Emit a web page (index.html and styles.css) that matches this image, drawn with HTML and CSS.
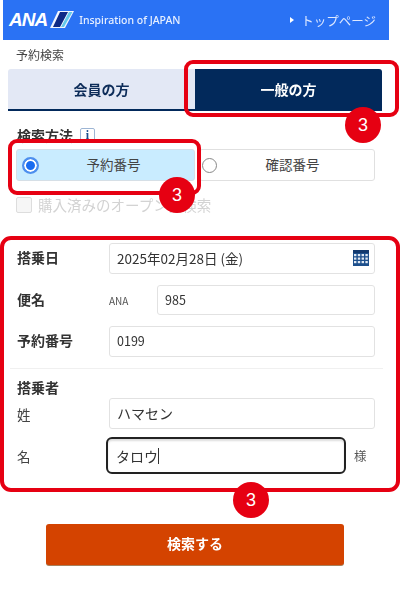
FILE: index.html
```html
<!DOCTYPE html>
<html lang="ja">
<head>
<meta charset="utf-8">
<title>予約検索</title>
<link rel="stylesheet" href="styles.css">
</head>
<body>
<div class="page">
  <header class="header">
    <div class="brand">
      <span class="ana">ANA</span>
      <svg class="wing" viewBox="0 0 24 18" width="24" height="18"><polygon points="8,0 24,0 15,17 0,17" fill="#f2f6ff"/><polygon points="10,1 18,1 10,16 3,16" fill="#0f2a86"/><polygon points="19,1 22.5,1 14,16 11,16" fill="#63c8ea"/></svg>
      <span class="tagline">Inspiration of JAPAN</span>
    </div>
    <div class="top-link"><span class="tri"></span>トップページ</div>
  </header>
  <div class="title">予約検索</div>
  <div class="tabs">
    <div class="tab">会員の方</div>
    <div class="tab active">一般の方</div>
  </div>
  <div class="method-label">検索方法<span class="info">i</span></div>
  <div class="radios">
    <div class="radio selected"><span class="dot on"></span><span class="radio-text">予約番号</span></div>
    <div class="radio"><span class="dot"></span><span class="radio-text">確認番号</span></div>
  </div>
  <div class="check-row"><span class="check"></span>購入済みのオープン券検索</div>
  <div class="form">
    <div class="row r-date">
      <div class="lbl b">搭乗日</div>
      <div class="input date"><span>2025年02月28日 (金)</span>
        <svg class="cal" viewBox="0 0 16 16" width="16" height="16"><rect x="0" y="0" width="16" height="16" fill="#1d4f8c"/><rect x="0" y="0" width="16" height="3" fill="#12396e"/><g fill="#dfe8f3"><rect x="1" y="4" width="2.4" height="2.2"/><rect x="4.8" y="4" width="2.4" height="2.2"/><rect x="8.6" y="4" width="2.4" height="2.2"/><rect x="12.4" y="4" width="2.4" height="2.2"/><rect x="1" y="7.5" width="2.4" height="2.2"/><rect x="4.8" y="7.5" width="2.4" height="2.2"/><rect x="8.6" y="7.5" width="2.4" height="2.2"/><rect x="12.4" y="7.5" width="2.4" height="2.2"/><rect x="1" y="11" width="2.4" height="2.2"/><rect x="4.8" y="11" width="2.4" height="2.2"/><rect x="8.6" y="11" width="2.4" height="2.2"/><rect x="12.4" y="11" width="2.4" height="2.2"/></g></svg>
      </div>
    </div>
    <div class="row r-flight">
      <div class="lbl b">便名</div>
      <div class="carrier">ANA</div>
      <div class="input grow">985</div>
    </div>
    <div class="row r-num">
      <div class="lbl b">予約番号</div>
      <div class="input">0199</div>
    </div>
    <div class="divider"></div>
    <div class="lbl b pax">搭乗者</div>
    <div class="row r-sei">
      <div class="lbl">姓</div>
      <div class="input">ハマセン</div>
    </div>
    <div class="row r-mei">
      <div class="lbl">名</div>
      <div class="input focus"><span class="caret">タロウ</span></div>
      <div class="sama">様</div>
    </div>
  </div>
  <div class="submit-wrap"><div class="submit">検索する</div></div>

  <div class="ring ring-tab"></div>
  <div class="ring ring-radio"></div>
  <div class="ring ring-form"></div>
  <div class="badge b1">3</div>
  <div class="badge b2">3</div>
  <div class="badge b3">3</div>
</div>
</body>
</html>
```
FILE: styles.css
```css
* { box-sizing: border-box; }
html, body { margin: 0; padding: 0; background: #fff; }
body { font-family: "Noto Sans CJK JP", "Noto Sans", sans-serif; color: #333; }
.page { position: relative; width: 400px; height: 593px; overflow: hidden; filter: blur(0.55px); }

.header { margin: 0 11px 0 3px; height: 40px; background: #2a72f4; color: #fff; display: flex; align-items: center; justify-content: space-between; padding: 0 13px 0 6px; }
.brand { display: flex; align-items: center; }
.ana { font-family: "Liberation Sans", sans-serif; font-weight: 700; font-style: italic; font-size: 19px; letter-spacing: -1px; margin-right: 3px; }
.wing { display: block; margin-right: 5px; }
.tagline { font-family: "Noto Sans", sans-serif; font-size: 10.5px; font-weight: 500; color: #e8f0ff; white-space: nowrap; }
.top-link { display: flex; align-items: center; font-size: 12.5px; color: #dfe9ff; }
.tri { width: 0; height: 0; border-left: 4px solid #fff; border-top: 3px solid transparent; border-bottom: 3px solid transparent; margin-right: 7px; }

.title { margin: 7px 0 0 16px; height: 22px; font-size: 12px; line-height: 16px; color: #444; }
.tabs { margin: 0 18px 0 8px; height: 42px; display: flex; border-bottom: 2px solid #02295b; }
.tab { flex: 1; display: flex; align-items: center; justify-content: center; font-size: 14px; font-weight: 700; color: #0d2c59; background: #e3e8f5; border-radius: 3px 0 0 0; }
.tab.active { background: #02295b; color: #fff; border-radius: 0 3px 0 0; }

.method-label { margin: 16px 0 0 17px; height: 17px; display: flex; align-items: center; font-size: 14px; font-weight: 700; color: #333; line-height: 17px; }
.info { margin-left: 7px; width: 15px; height: 15px; border: 1px solid #9db5d4; border-radius: 2px; display: flex; align-items: center; justify-content: center; font-family: "Liberation Serif", serif; font-size: 12px; font-weight: 700; color: #1c4f8e; }

.radios { margin: 5px 25px 0 16px; height: 32px; display: flex; gap: 6px; }
.radio { flex: 1; display: flex; align-items: center; border: 1px solid #e0e0e0; border-radius: 3px; padding-left: 5px; background: #fff; position: relative; }
.radio.selected { flex: none; width: 179px; background: #c9ecff; border-color: #d6dfe6; }
.radio + .radio { margin-left: -2px; padding-left: 2px; }
.dot { width: 15px; height: 15px; border-radius: 50%; border: 1px solid #888; background: #fff; flex: none; }
.dot.on { width: 17px; height: 17px; border: 2px solid #4d8fee; background: #1a6cf0; box-shadow: inset 0 0 0 2px #fff; }
.radio-text { flex: 1; text-align: center; font-size: 13.5px; line-height: 18px; color: #444; padding: 0 6px 2px 0; }

.check-row { margin: 15px 0 0 16px; height: 18px; display: flex; align-items: center; font-size: 14.5px; color: #d3d3d3; line-height: 18px; white-space: nowrap; }
.check { width: 16px; height: 16px; border: 1px solid #ddd; border-radius: 2px; background: #f6f6f6; margin-right: 6px; flex: none; }

.form { margin: 29px 25px 0 17px; }
.row { display: flex; align-items: center; }
.lbl { width: 92px; flex: none; font-size: 13.5px; color: #444; line-height: 16px; }
.lbl.b { font-size: 14px; font-weight: 700; color: #333; padding-bottom: 3px; }
.input { flex: 1; height: 31px; border: 1.5px solid #e2e2e2; border-radius: 3px; background: #fff; display: flex; align-items: center; padding: 0 0 2px 7px; font-size: 12.5px; color: #333; }
.date { justify-content: space-between; padding-right: 5px; font-size: 13.5px; }
.cal { display: block; }
.carrier { width: 48px; flex: none; font-size: 10px; color: #555; }
.grow { flex: 1; }
.r-flight { margin-top: 11px; }
.r-flight .input { height: 30px; }
.r-num { margin-top: 11px; }
.divider { margin: 11px -8px 0 -7px; height: 1px; background: #f0f0f0; }
.pax { margin-top: 10px; }
.r-sei { margin-top: 0; }
.r-sei .input { font-size: 14px; }
.r-mei { margin-top: 8px; }
.r-mei .lbl { width: 89px; }
.focus { flex: none; width: 240px; height: 37px; border: 2px solid #222; border-radius: 6px; box-shadow: inset 0 2px 2px #ddd; font-size: 14px; padding: 0 0 0 8px; }
.caret { border-right: 1px solid #333; line-height: 16px; }
.sama { margin-left: 8px; font-size: 12.5px; color: #555; }

.submit-wrap { margin: 50px 56px 0 46px; }
.submit { height: 41px; background: #d44300; border-radius: 3px; display: flex; align-items: center; justify-content: center; padding-bottom: 3px; color: #fff; font-size: 14px; font-weight: 700; box-shadow: 0 1px 0 #a8805a; }

.ring { position: absolute; border: 4px solid #e60012; border-radius: 9px; }
.ring-tab { left: 184px; top: 60px; width: 215px; height: 57px; }
.ring-radio { left: 8px; top: 139px; width: 193px; height: 56px; }
.ring-form { left: 0; top: 236px; width: 400px; height: 256px; border-radius: 11px; }
.badge { position: absolute; width: 36px; height: 36px; border-radius: 50%; background: #e60012; color: #fff; font-family: "Liberation Sans", sans-serif; font-size: 18px; display: flex; align-items: center; justify-content: center; }
.b1 { left: 345px; top: 107px; }
.b2 { left: 159px; top: 177px; }
.b3 { left: 233px; top: 482px; }
```
